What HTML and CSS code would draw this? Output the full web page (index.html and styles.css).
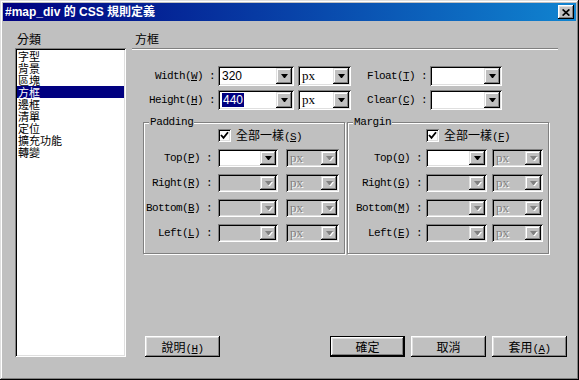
FILE: index.html
```html
<!DOCTYPE html>
<html lang="zh-Hant">
<head>
    <meta charset="UTF-8">
    <title>#map_div 的 CSS 規則定義</title>
    <link rel="stylesheet" href="styles.css">
</head>
<body>
<div class="window">
    <div class="titlebar">
        <span class="title">#map_div 的 CSS 規則定義</span>
        <span class="close-btn">
            <svg width="8" height="7" viewBox="0 0 8 7"><path d="M0.6 0.4L7.4 6.6M7.4 0.4L0.6 6.6" stroke="#000" stroke-width="1.7" fill="none"/></svg>
        </span>
    </div>

    <div class="dialog">
        <div class="sidebar">
            <div class="caption">分類</div>
            <ul class="category-list">
                <li>字型</li>
                <li>背景</li>
                <li>區塊</li>
                <li class="selected">方框</li>
                <li>邊框</li>
                <li>清單</li>
                <li>定位</li>
                <li>擴充功能</li>
                <li>轉變</li>
            </ul>
        </div>

        <div class="panel">
            <div class="caption panel-title">方框</div>

            <div class="size-grid">
                <span class="lbl">Width(<u>W</u>) :</span>
                <div class="combo"><span class="value">320</span><span class="arrow"></span></div>
                <div class="combo unit"><span class="value serif">px</span><span class="arrow"></span></div>
                <span class="lbl">Float(<u>T</u>) :</span>
                <div class="combo"><span class="value"></span><span class="arrow"></span></div>

                <span class="lbl">Height(<u>H</u>) :</span>
                <div class="combo"><span class="value"><span class="sel">440</span></span><span class="arrow"></span></div>
                <div class="combo unit"><span class="value serif">px</span><span class="arrow"></span></div>
                <span class="lbl">Clear(<u>C</u>) :</span>
                <div class="combo"><span class="value"></span><span class="arrow"></span></div>
            </div>

            <div class="groups">
                <fieldset class="group padding-group">
                    <legend class="lbl">Padding</legend>
                    <div class="group-grid">
                        <div class="same-row">
                            <span class="checkbox"><svg width="9" height="9" viewBox="0 0 9 9"><path d="M1 4L3.5 6.8L8 1.2" stroke="#000" stroke-width="1.8" fill="none"/></svg></span>
                            <span>全部一樣<span class="lbl">(<u>S</u>)</span></span>
                        </div>
                        <span class="lbl">Top(<u>P</u>) :</span>
                        <div class="combo sm"><span class="value"></span><span class="arrow"></span></div>
                        <div class="combo sm unit off"><span class="value serif">px</span><span class="arrow"></span></div>

                        <span class="lbl">Right(<u>R</u>) :</span>
                        <div class="combo sm off"><span class="value"></span><span class="arrow"></span></div>
                        <div class="combo sm unit off"><span class="value serif">px</span><span class="arrow"></span></div>

                        <span class="lbl">Bottom(<u>B</u>) :</span>
                        <div class="combo sm off"><span class="value"></span><span class="arrow"></span></div>
                        <div class="combo sm unit off"><span class="value serif">px</span><span class="arrow"></span></div>

                        <span class="lbl">Left(<u>L</u>) :</span>
                        <div class="combo sm off"><span class="value"></span><span class="arrow"></span></div>
                        <div class="combo sm unit off"><span class="value serif">px</span><span class="arrow"></span></div>
                    </div>
                </fieldset>

                <fieldset class="group margin-group">
                    <legend class="lbl">Margin</legend>
                    <div class="group-grid">
                        <div class="same-row">
                            <span class="checkbox"><svg width="9" height="9" viewBox="0 0 9 9"><path d="M1 4L3.5 6.8L8 1.2" stroke="#000" stroke-width="1.8" fill="none"/></svg></span>
                            <span>全部一樣<span class="lbl">(<u>F</u>)</span></span>
                        </div>
                        <span class="lbl">Top(<u>O</u>) :</span>
                        <div class="combo sm"><span class="value"></span><span class="arrow"></span></div>
                        <div class="combo sm unit off"><span class="value serif">px</span><span class="arrow"></span></div>

                        <span class="lbl">Right(<u>G</u>) :</span>
                        <div class="combo sm off"><span class="value"></span><span class="arrow"></span></div>
                        <div class="combo sm unit off"><span class="value serif">px</span><span class="arrow"></span></div>

                        <span class="lbl">Bottom(<u>M</u>) :</span>
                        <div class="combo sm off"><span class="value"></span><span class="arrow"></span></div>
                        <div class="combo sm unit off"><span class="value serif">px</span><span class="arrow"></span></div>

                        <span class="lbl">Left(<u>E</u>) :</span>
                        <div class="combo sm off"><span class="value"></span><span class="arrow"></span></div>
                        <div class="combo sm unit off"><span class="value serif">px</span><span class="arrow"></span></div>
                    </div>
                </fieldset>
            </div>

            <div class="buttons">
                <button class="btn">說明<span class="lbl">(<u>H</u>)</span></button>
                <button class="btn default push">確定</button>
                <button class="btn">取消</button>
                <button class="btn">套用<span class="lbl">(<u>A</u>)</span></button>
            </div>
        </div>
    </div>
</div>
</body>
</html>
```

FILE: styles.css
```css
body {
    margin: 0;
    background: #c0c0c0;
    font-family: "Noto Sans CJK TC", "Liberation Sans", sans-serif;
    font-size: 12px;
    color: #000;
}
.window {
    width: 579px;
    height: 380px;
    box-sizing: border-box;
    padding: 3px;
    display: flex;
    flex-direction: column;
    box-shadow: inset -1px -1px #000, inset 1px 1px #dfdfdf, inset -2px -2px #808080, inset 2px 2px #fff;
}
.titlebar {
    height: 18px;
    display: flex;
    align-items: center;
    justify-content: space-between;
    padding: 0 2px;
    background: linear-gradient(to right, #000080, #1084d0);
    color: #fff;
}
.title {
    font-family: "Liberation Sans", "Noto Sans CJK TC", sans-serif;
    font-weight: bold;
    font-size: 12px;
    line-height: 14px;
}
.close-btn {
    width: 16px;
    height: 14px;
    display: flex;
    align-items: center;
    justify-content: center;
    background: #c0c0c0;
    box-shadow: inset -1px -1px #000, inset 1px 1px #fff, inset -2px -2px #808080, inset 2px 2px #dfdfdf;
}
.dialog {
    flex: 1;
    display: flex;
    gap: 6px;
    padding: 11px 9px 20px 12px;
    min-height: 0;
}
.sidebar {
    width: 111px;
    display: flex;
    flex-direction: column;
}
.caption {
    height: 14px;
    line-height: 14px;
    margin-bottom: 2px;
    padding-left: 2px;
}
.category-list {
    flex: 1;
    margin: 0;
    padding: 2px;
    list-style: none;
    background: #fff;
    box-shadow: inset 1px 1px #808080, inset -1px -1px #fff, inset 2px 2px #000, inset -2px -2px #dfdfdf;
}
.category-list li {
    height: 12px;
    line-height: 12px;
    font-size: 11px;
    padding-left: 1px;
}
.category-list li.selected {
    background: #000080;
    color: #fff;
}
.panel {
    flex: 1;
    display: flex;
    flex-direction: column;
}
.panel-title {
    height: 16px;
    margin: 0 9px 0 0;
    padding-left: 3px;
    box-sizing: content-box;
    border-bottom: 1px solid #808080;
    box-shadow: 0 1px #fff;
}
.lbl {
    font-family: "Liberation Mono", monospace;
    font-size: 11px;
    letter-spacing: -0.6px;
}
.size-grid {
    margin-top: 17px;
    display: grid;
    grid-template-columns: 86px 76px 57px 79px 72px;
    grid-auto-rows: 20px;
    row-gap: 4px;
    align-items: center;
}
.size-grid .lbl {
    text-align: right;
    padding-right: 3px;
}
.size-grid .unit {
    width: 53px;
    justify-self: end;
}
.combo {
    height: 20px;
    box-sizing: border-box;
    display: flex;
    padding: 2px;
    background: #fff;
    box-shadow: inset 1px 1px #808080, inset -1px -1px #fff, inset 2px 2px #000, inset -2px -2px #dfdfdf;
}
.combo.sm {
    height: 18px;
}
.combo .value {
    flex: 1;
    padding-left: 2px;
    font-family: "Liberation Sans", sans-serif;
    font-size: 12px;
    line-height: 16px;
    overflow: hidden;
}
.combo.sm .value {
    line-height: 14px;
}
.combo .value.serif {
    font-family: "Liberation Serif", serif;
    font-size: 13px;
}
.sel {
    background: #000080;
    color: #fff;
    padding: 0 1px;
}
.arrow {
    width: 16px;
    display: flex;
    align-items: center;
    justify-content: center;
    background: #c0c0c0;
    box-shadow: inset -1px -1px #000, inset 1px 1px #dfdfdf, inset -2px -2px #808080, inset 2px 2px #fff;
}
.arrow::after {
    content: "";
    width: 1px;
    height: 0;
    border-left: 3px solid transparent;
    border-right: 3px solid transparent;
    border-top: 4px solid #000;
}
.combo.off {
    background: #c0c0c0;
}
.combo.off .value {
    color: #808080;
    text-shadow: 1px 1px #fff;
}
.combo.off .arrow::after {
    border-top-color: #808080;
    filter: drop-shadow(1px 1px 0 #fff);
}
.groups {
    display: flex;
    gap: 2px;
    margin: 6px 0 0 11px;
}
.group {
    margin: 0;
    padding: 1px 0 0 0;
    width: 202px;
    height: 138px;
    box-sizing: border-box;
    min-inline-size: 0;
    border: 1px solid #808080;
    box-shadow: inset 1px 1px #fff, 1px 1px #fff;
}
.group legend {
    margin-left: 5px;
    padding: 0 1px;
    line-height: 12px;
    letter-spacing: -0.4px;
    background: #c0c0c0;
}
.group-grid {
    display: grid;
    grid-template-rows: 13px repeat(4, 18px);
    row-gap: 7px;
    align-items: center;
}
.padding-group .group-grid {
    grid-template-columns: 74px 60px 61px;
}
.margin-group .group-grid {
    grid-template-columns: 78px 61px 56px;
}
.group-grid .lbl {
    text-align: right;
}
.padding-group .group-grid > .lbl {
    padding-right: 6px;
}
.margin-group .group-grid > .lbl {
    padding-right: 4px;
}
.padding-group .unit {
    width: 53px;
    justify-self: end;
}
.margin-group .unit {
    width: 51px;
    justify-self: end;
}
.same-row {
    grid-column: 2 / 4;
    display: flex;
    align-items: center;
    gap: 5px;
    height: 13px;
    line-height: 13px;
}
.checkbox {
    width: 13px;
    height: 13px;
    box-sizing: border-box;
    display: flex;
    align-items: center;
    justify-content: center;
    background: #fff;
    box-shadow: inset 1px 1px #808080, inset -1px -1px #fff, inset 2px 2px #000, inset -2px -2px #dfdfdf;
}
.buttons {
    margin-top: auto;
    display: flex;
    gap: 6px;
    padding-left: 13px;
}
.btn {
    width: 75px;
    height: 21px;
    padding: 0;
    border: 0;
    background: #c0c0c0;
    font-family: "Noto Sans CJK TC", sans-serif;
    font-size: 12px;
    color: #000;
    box-shadow: inset -1px -1px #000, inset 1px 1px #fff, inset -2px -2px #808080, inset 2px 2px #dfdfdf;
}
.btn.default {
    border: 1px solid #000;
}
.btn.push {
    margin-left: auto;
}
```
